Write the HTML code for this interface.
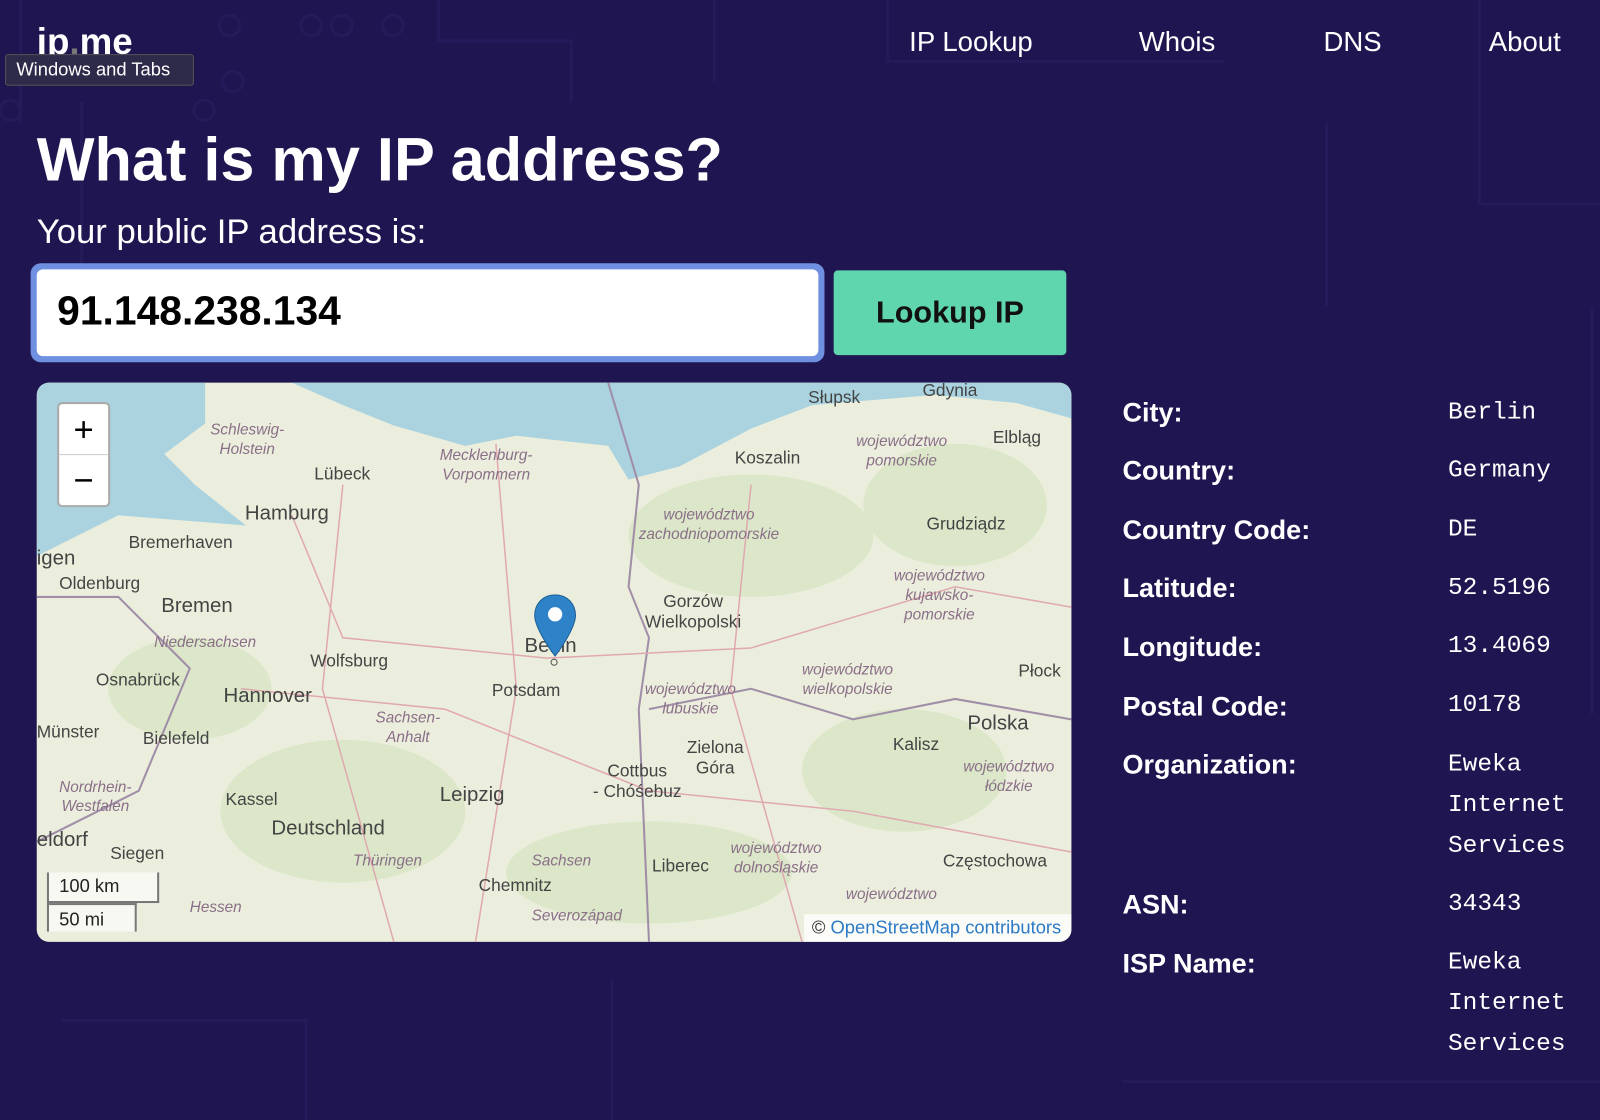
<!DOCTYPE html>
<html><head><meta charset="utf-8"><style>
*{margin:0;padding:0;box-sizing:border-box}
body{width:1600px;height:1098px;background:#1f1550;font-family:"Liberation Sans",sans-serif;color:#fff;overflow:hidden}
#w{position:relative;width:1568px;height:1076px;transform:scale(1.0204);transform-origin:0 0}
.a{position:absolute;white-space:nowrap}
.nav{font-size:27px}
.lbl{font-size:26.5px;font-weight:bold}
.val{font-family:"Liberation Mono",monospace;font-size:24px;line-height:40px}
.m{position:absolute;white-space:nowrap;color:#444;font-size:17px}
.r{color:#8a6f88;font-style:italic;font-size:15px;line-height:19px;text-align:center}
</style></head><body><div id="w">
<svg class="a" style="left:0;top:0" width="1600" height="1098">
<g fill="none" stroke="#261b5a" stroke-width="3">
<path d="M20 0V120M80 100V300M430 0V40H560V100M700 0V80M870 0V60H1200M1300 120V300M1450 0V200H1600M60 1000H300V1098M600 960V1098M1100 1060H1600M1560 300V700"/>
<circle cx="225" cy="25" r="10"/><circle cx="305" cy="25" r="10"/><circle cx="335" cy="25" r="10"/><circle cx="385" cy="25" r="10"/><circle cx="10" cy="108" r="10"/><circle cx="200" cy="108" r="10"/><circle cx="228" cy="80" r="10"/>
</g></svg>
<div class="a" style="left:36px;top:20px;font-size:36px;font-weight:bold">ip<span style="color:#777">.</span>me</div>
<div class="a" style="left:5px;top:53px;width:185px;height:31px;background:#2e2a4a;border:1px solid #555;border-radius:3px;font-size:18px;padding:4px 10px">Windows and Tabs</div>
<div class="a nav" style="left:891px;top:26px">IP Lookup</div>
<div class="a nav" style="left:1116px;top:26px">Whois</div>
<div class="a nav" style="left:1297px;top:26px">DNS</div>
<div class="a nav" style="left:1459px;top:26px">About</div>
<div class="a" style="left:36px;top:122px;font-size:60px;font-weight:bold">What is my IP address?</div>
<div class="a" style="left:36px;top:208px;font-size:34px">Your public IP address is:</div>
<div class="a" style="left:30px;top:258px;width:778px;height:97px;border-radius:10px;background:#6f8fe0"></div>
<div class="a" style="left:36px;top:264px;width:766px;height:85px;border-radius:6px;background:#fff;color:#000;font-size:40px;font-weight:bold;padding:19px 20px">91.148.238.134</div>
<div class="a" style="left:817px;top:265px;width:228px;height:83px;border-radius:4px;background:#5fd6ad;color:#111;font-size:30px;font-weight:bold;text-align:center;line-height:83px">Lookup IP</div>

<div class="a" style="left:36px;top:375px;width:1014px;height:548px;border-radius:12px;overflow:hidden;background:#eceedd">
<svg width="1014" height="548" style="position:absolute;left:0;top:0">
<g fill="#dbe7c8"><ellipse cx="700" cy="150" rx="120" ry="60"/><ellipse cx="900" cy="120" rx="90" ry="60"/><ellipse cx="300" cy="420" rx="120" ry="70"/><ellipse cx="150" cy="300" rx="80" ry="50"/><ellipse cx="850" cy="380" rx="100" ry="60"/><ellipse cx="600" cy="480" rx="140" ry="50"/></g>
<g fill="#aad3df"><path d="M0 0H165V40L125 70 155 100 205 140 80 130 30 155 0 170Z"/><path d="M250 0H1014V35L960 20 880 12 760 22 700 45 630 82 580 95 560 62 470 52 420 62 350 42 300 22Z"/></g>
<g fill="none" stroke="#a08ea8" stroke-width="2"><path d="M560 0L590 100 580 200 600 250 590 320 600 548"/><path d="M600 320L700 300 800 330 900 310 1014 330"/><path d="M0 210H80L150 280 100 400 0 450"/></g>
<g fill="none" stroke="#e0a9b0" stroke-width="1.5"><path d="M250 130L300 250 500 270 700 260 900 200 1014 220"/><path d="M200 300L400 320 600 400 800 420 1014 460"/><path d="M300 100L280 300 350 548"/><path d="M700 100L680 300 750 548"/><path d="M450 60L470 300 430 548"/></g>
</svg>
<div class="m r" style="left:170px;top:37px">Schleswig-<br>Holstein</div>
<div class="m r" style="left:395px;top:62px">Mecklenburg-<br>Vorpommern</div>
<div class="m" style="left:272px;top:80px">Lübeck</div>
<div class="m" style="left:204px;top:117px;font-size:20px">Hamburg</div>
<div class="m" style="left:90px;top:147px">Bremerhaven</div>
<div class="m" style="left:0;top:161px;font-size:20px">igen</div>
<div class="m" style="left:22px;top:187px">Oldenburg</div>
<div class="m" style="left:122px;top:208px;font-size:20px">Bremen</div>
<div class="m r" style="left:115px;top:245px">Niedersachsen</div>
<div class="m" style="left:268px;top:263px">Wolfsburg</div>
<div class="m" style="left:58px;top:282px">Osnabrück</div>
<div class="m" style="left:183px;top:296px;font-size:20px">Hannover</div>
<div class="m" style="left:446px;top:292px">Potsdam</div>
<div class="m r" style="left:332px;top:319px">Sachsen-<br>Anhalt</div>
<div class="m" style="left:0;top:333px">Münster</div>
<div class="m" style="left:104px;top:339px">Bielefeld</div>
<div class="m r" style="left:22px;top:387px">Nordrhein-<br>Westfalen</div>
<div class="m" style="left:185px;top:399px">Kassel</div>
<div class="m" style="left:395px;top:393px;font-size:20px">Leipzig</div>
<div class="m" style="left:230px;top:426px;font-size:20px">Deutschland</div>
<div class="m" style="left:0;top:437px;font-size:20px">eldorf</div>
<div class="m" style="left:72px;top:452px">Siegen</div>
<div class="m r" style="left:310px;top:459px">Thüringen</div>
<div class="m" style="left:433px;top:483px">Chemnitz</div>
<div class="m r" style="left:485px;top:459px">Sachsen</div>
<div class="m r" style="left:150px;top:505px">Hessen</div>
<div class="m r" style="left:485px;top:513px">Severozápad</div>
<div class="m" style="left:756px;top:5px">Słupsk</div>
<div class="m" style="left:868px;top:-2px">Gdynia</div>
<div class="m" style="left:684px;top:64px">Koszalin</div>
<div class="m" style="left:937px;top:44px">Elbląg</div>
<div class="m r" style="left:803px;top:48px">województwo<br>pomorskie</div>
<div class="m r" style="left:590px;top:120px">województwo<br>zachodniopomorskie</div>
<div class="m" style="left:872px;top:129px">Grudziądz</div>
<div class="m r" style="left:840px;top:180px">województwo<br>kujawsko-<br>pomorskie</div>
<div class="m" style="left:596px;top:205px;text-align:center">Gorzów<br>Wielkopolski</div>
<div class="m" style="left:478px;top:247px;font-size:20px">Berlin</div>
<div class="m r" style="left:596px;top:291px">województwo<br>lubuskie</div>
<div class="m r" style="left:750px;top:272px">województwo<br>wielkopolskie</div>
<div class="m" style="left:962px;top:273px">Płock</div>
<div class="m" style="left:912px;top:323px;font-size:20px">Polska</div>
<div class="m" style="left:839px;top:345px">Kalisz</div>
<div class="m" style="left:637px;top:348px;text-align:center">Zielona<br>Góra</div>
<div class="m" style="left:545px;top:371px;text-align:center">Cottbus<br>- Chóśebuz</div>
<div class="m r" style="left:908px;top:367px">województwo<br>łódzkie</div>
<div class="m r" style="left:680px;top:447px">województwo<br>dolnośląskie</div>
<div class="m" style="left:603px;top:464px">Liberec</div>
<div class="m" style="left:888px;top:459px">Częstochowa</div>
<div class="m r" style="left:793px;top:492px">województwo</div>
<svg style="position:absolute;left:487px;top:206px" width="42" height="72"><path d="M21 2C9 2 1 11 1 22 1 36 21 62 21 62S41 36 41 22C41 11 33 2 21 2Z" fill="#2e83c8" stroke="#1e5f96"/><circle cx="21" cy="21" r="7" fill="#fff"/><circle cx="20" cy="68" r="3" fill="none" stroke="#555"/></svg>
<div style="position:absolute;left:20px;top:19px;width:52px;height:103px;background:#fff;border:2px solid #aaa;border-radius:5px">
<div style="height:50px;border-bottom:1px solid #ccc;text-align:center;font-size:34px;line-height:50px;color:#000">+</div>
<div style="text-align:center;font-size:34px;line-height:50px;color:#000">−</div></div>
<div style="position:absolute;left:10px;top:480px;width:110px;height:30px;border:2px solid #777;border-top:none;background:rgba(255,255,255,.6);color:#222;font-size:18px;padding:3px 10px">100 km</div>
<div style="position:absolute;left:10px;top:510px;width:88px;height:28px;border:2px solid #777;border-bottom:none;background:rgba(255,255,255,.6);color:#222;font-size:18px;padding:4px 10px">50 mi</div>
<div style="position:absolute;right:0;bottom:0;padding:3px 10px 3px 8px;background:rgba(255,255,255,.8);color:#333;font-size:18px">© <span style="color:#2c7ac6">OpenStreetMap contributors</span></div>
</div>

<div class="a lbl" style="left:1100px;top:389px">City:</div><div class="a val" style="left:1419px;top:385px">Berlin</div>
<div class="a lbl" style="left:1100px;top:446px">Country:</div><div class="a val" style="left:1419px;top:442px">Germany</div>
<div class="a lbl" style="left:1100px;top:504px">Country Code:</div><div class="a val" style="left:1419px;top:500px">DE</div>
<div class="a lbl" style="left:1100px;top:561px">Latitude:</div><div class="a val" style="left:1419px;top:557px">52.5196</div>
<div class="a lbl" style="left:1100px;top:619px">Longitude:</div><div class="a val" style="left:1419px;top:614px">13.4069</div>
<div class="a lbl" style="left:1100px;top:677px">Postal Code:</div><div class="a val" style="left:1419px;top:672px">10178</div>
<div class="a lbl" style="left:1100px;top:734px">Organization:</div><div class="a val" style="left:1419px;top:730px">Eweka<br>Internet<br>Services</div>
<div class="a lbl" style="left:1100px;top:871px">ASN:</div><div class="a val" style="left:1419px;top:867px">34343</div>
<div class="a lbl" style="left:1100px;top:929px">ISP Name:</div><div class="a val" style="left:1419px;top:924px">Eweka<br>Internet<br>Services</div>
</div></body></html>
